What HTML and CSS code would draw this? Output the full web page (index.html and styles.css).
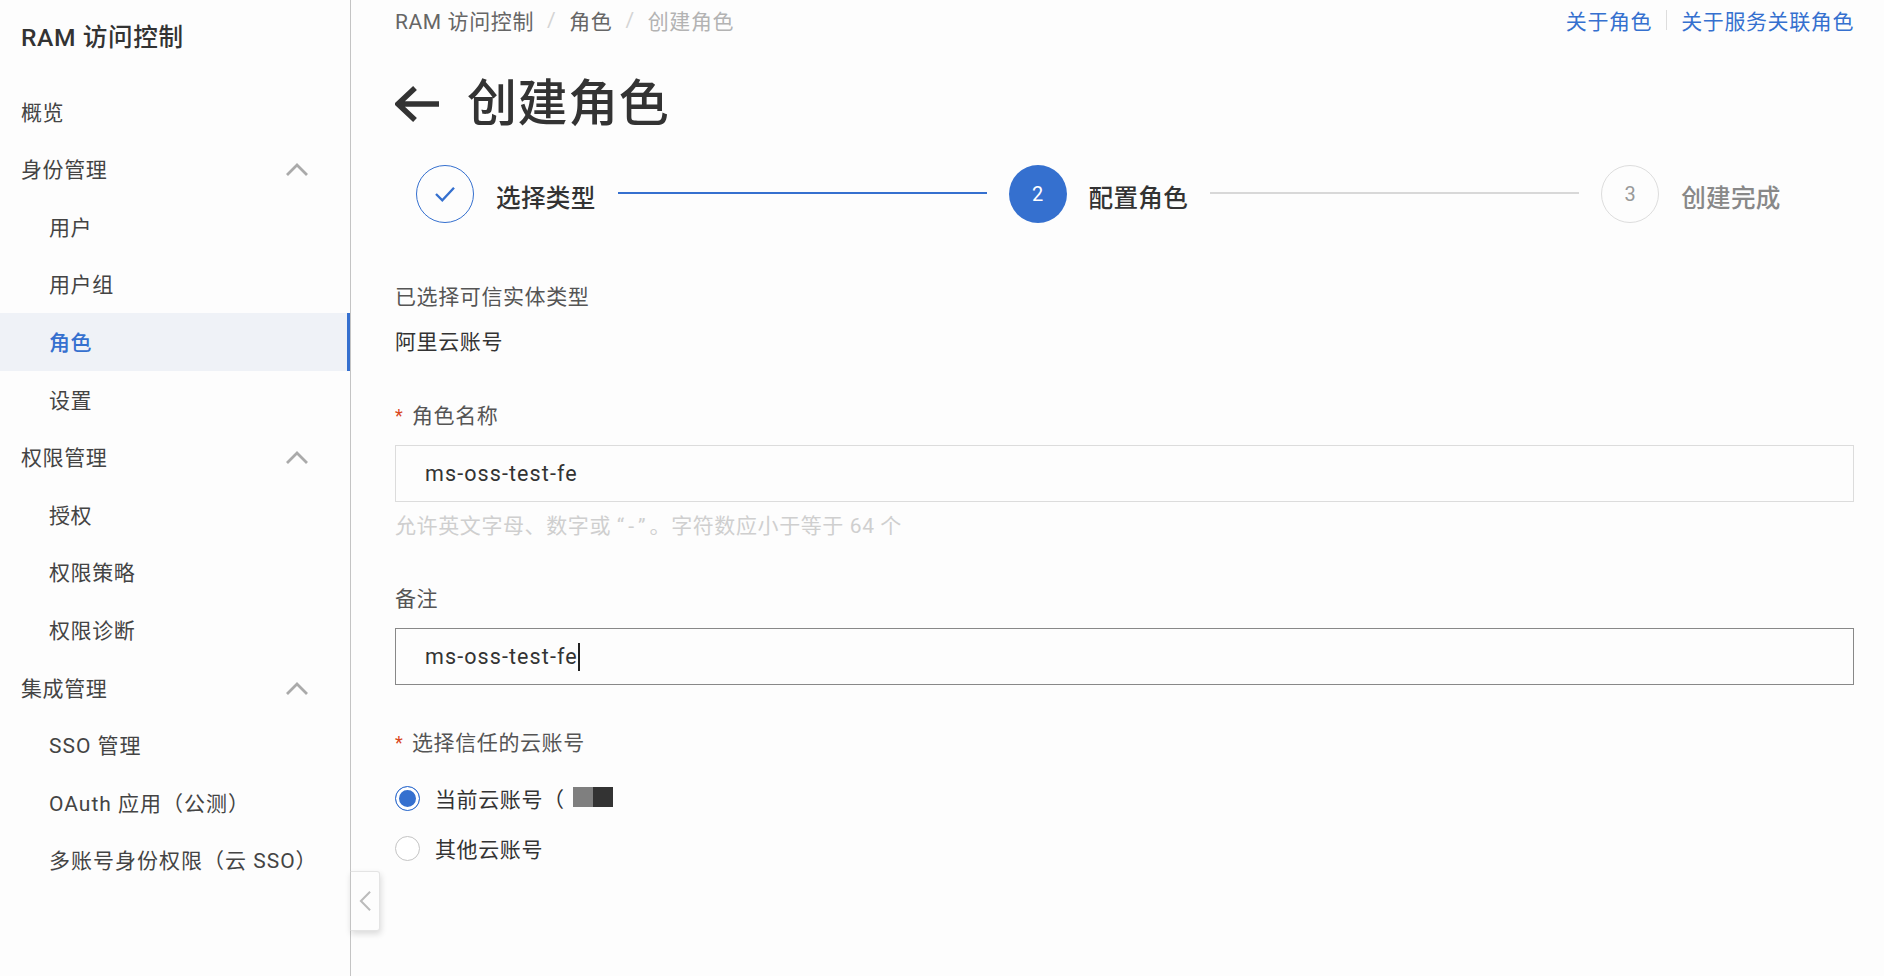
FILE: index.html
```html
<!DOCTYPE html>
<html lang="zh-CN">
<head>
<meta charset="utf-8">
<title>创建角色</title>
<link rel="stylesheet" href="styles.css">
</head>
<body>
<div class="app">
  <aside class="sidebar">
    <div class="brand">RAM 访问控制</div>
    <nav class="nav">
      <a class="item">概览</a>
      <a class="item group">身份管理<svg class="chev" viewBox="0 0 24 14"><path d="M2 12 L12 2 L22 12"/></svg></a>
      <a class="item sub">用户</a>
      <a class="item sub">用户组</a>
      <a class="item sub active">角色</a>
      <a class="item sub">设置</a>
      <a class="item group">权限管理<svg class="chev" viewBox="0 0 24 14"><path d="M2 12 L12 2 L22 12"/></svg></a>
      <a class="item sub">授权</a>
      <a class="item sub">权限策略</a>
      <a class="item sub">权限诊断</a>
      <a class="item group">集成管理<svg class="chev" viewBox="0 0 24 14"><path d="M2 12 L12 2 L22 12"/></svg></a>
      <a class="item sub wide">SSO 管理</a>
      <a class="item sub wide">OAuth 应用（公测）</a>
      <a class="item sub wide">多账号身份权限（云 SSO）</a>
    </nav>
    <div class="collapse"><svg viewBox="0 0 14 24"><path d="M12 2 L2 12 L12 22"/></svg></div>
  </aside>
  <main class="main">
    <div class="topbar">
      <div class="crumbs">
        <span class="crumb">RAM 访问控制</span><span class="sep">/</span>
        <span class="crumb">角色</span><span class="sep">/</span>
        <span class="crumb current">创建角色</span>
      </div>
      <div class="links"><a class="link">关于角色</a><span class="divider"></span><a class="link">关于服务关联角色</a></div>
    </div>
    <h1 class="title">
      <svg class="back" viewBox="0 0 44 36"><path d="M44 18 H4 M20 2 L3 18 L20 34"/></svg>
      <span>创建角色</span>
    </h1>
    <div class="steps">
      <div class="step done"><span class="dot"><svg viewBox="0 0 24 20"><path d="M2 10 L9 17 L22 3"/></svg></span><span class="step-label">选择类型</span></div>
      <div class="bar on"></div>
      <div class="step now"><span class="dot">2</span><span class="step-label">配置角色</span></div>
      <div class="bar"></div>
      <div class="step todo"><span class="dot">3</span><span class="step-label">创建完成</span></div>
    </div>
    <form class="form">
      <div class="field-label plain">已选择可信实体类型</div>
      <div class="value">阿里云账号</div>
      <div class="field-label name"><span class="req">*</span>角色名称</div>
      <div class="input">ms-oss-test-fe</div>
      <div class="hint">允许英文字母、数字或 <span class="quote">“-”</span>。字符数应小于等于 64 个</div>
      <div class="field-label note">备注</div>
      <div class="input focus"><span class="typed">ms-oss-test-fe</span></div>
      <div class="field-label trust"><span class="req">*</span>选择信任的云账号</div>
      <div class="radio first"><span class="circle checked"></span><span>当前云账号（</span><span class="mask"><i class="m1"></i><i class="m2"></i></span></div>
      <div class="radio"><span class="circle"></span><span>其他云账号</span></div>
    </form>
  </main>
</div>
</body>
</html>
```
FILE: styles.css
```css
* { box-sizing: border-box; }
html, body { margin: 0; height: 100%; overflow: hidden; }
body {
  background: #fdfdfd;
  color: #333;
  font-family: Roboto, "Noto Sans CJK SC", "Liberation Sans", sans-serif;
  font-size: 21px;
  letter-spacing: .6px;
}
.app { display: flex; height: 976px; }
.sidebar {
  position: relative;
  width: 351px;
  flex: none;
  border-right: 1px solid #c4c4c4;
  padding-top: 20px;
}
.brand { height: 36px; line-height: 36px; padding-left: 21px; font-size: 24.6px; font-weight: 500; letter-spacing: .6px; color: #333; }
.nav { display: flex; flex-direction: column; margin-top: 26.6px; }
.item {
  display: flex;
  align-items: center;
  height: 57.6px;
  padding-left: 21px;
  padding-bottom: 1.6px;
  color: #444;
  position: relative;
}
.sub { padding-left: 49px; }
.wide { letter-spacing: 1px; }
.chev { position: absolute; left: 285px; top: 23px; width: 24px; height: 14px; }
.chev path { fill: none; stroke: #aaa; stroke-width: 2.8; }
.active { background: #eff2f7; color: #3570cf; font-weight: 500; }
.active::after { content: ""; position: absolute; right: 0; top: 0; bottom: 0; width: 3px; background: #3570cf; }
.collapse {
  position: absolute;
  left: 350px;
  top: 871px;
  width: 30px;
  height: 60px;
  background: #fdfdfd;
  border: 1px solid #e4e4e4;
  border-left: 1px solid #c4c4c4;
  border-radius: 0 3px 3px 0;
  box-shadow: 1px 3px 6px rgba(0,0,0,.14);
  display: flex;
  align-items: center;
  justify-content: center;
}
.collapse svg { width: 13px; height: 22px; }
.collapse path { fill: none; stroke: #bbb; stroke-width: 2.2; }
.main { flex: 1; padding: 0 30px 0 44px; min-width: 0; }
.topbar { display: flex; justify-content: space-between; align-items: center; height: 39px; }
.crumbs { display: flex; align-items: center; color: #666; }
.sep { color: #d4d4d4; margin: 0 13px; }
.current { color: #b3b3b3; }
.links { display: flex; align-items: center; margin-right: 0; }
.link { color: #3570cf; }
.divider { width: 1px; height: 20px; background: #ddd; margin: 0 14px 0 14px; }
.title {
  display: flex;
  align-items: center;
  gap: 28px;
  margin: 38px 0 0;
  height: 54px;
  font-size: 50px;
  letter-spacing: .6px;
  font-weight: 500;
  color: #333;
  line-height: 54px;
}
.back { width: 44px; height: 36px; flex: none; }
.back path { fill: none; stroke: #333; stroke-width: 5.5; }
.steps { display: flex; align-items: flex-start; margin-top: 34px; padding-left: 21px; height: 58px; }
.step { display: flex; align-items: center; flex: none; }
.dot {
  width: 58px;
  height: 58px;
  border-radius: 50%;
  display: flex;
  align-items: center;
  justify-content: center;
  font-size: 20px;
  letter-spacing: 0;
  flex: none;
}
.step-label { font-size: 24.6px; letter-spacing: .3px; font-weight: 500; margin-left: 22px; padding-top: 3px; color: #333; }
.done .dot { border: 1px solid #3570cf; }
.done .dot svg { width: 22px; height: 18px; }
.done .dot path { fill: none; stroke: #3570cf; stroke-width: 2.6; }
.now .dot { background: #3570cf; color: #fff; }
.todo .dot { border: 1px solid #ddd; color: #999; }
.todo .step-label { color: #888; }
.bar { width: 369px; height: 2px; background: #d8d8d8; margin: 27px 22px 0 22px; flex: none; }
.bar.on { background: #3570cf; }
.form { margin-top: 59px; }
.field-label { color: #555; line-height: 30px; display: flex; }
.req { color: #d9471e; width: 17px; flex: none; font-size: 18px; letter-spacing: 0; }
.value { margin-top: 15px; line-height: 30px; color: #333; }
.name { margin-top: 44px; }
.input {
  margin-top: 14px;
  height: 57px;
  border: 1px solid #dcdcdc;
  padding-left: 29px;
  display: flex;
  align-items: center;
  font-size: 21.5px;
  letter-spacing: 1.1px;
  color: #333;
}
.hint { margin-top: 9px; line-height: 30px; color: #cfcfcf; }
.quote { letter-spacing: 4px; }
.note { margin-top: 43px; }
.focus { border-color: #888; }
.typed { border-right: 2px solid #222; line-height: 28px; margin-right: 0; }
.trust { margin-top: 43px; }
.radio { display: flex; align-items: center; height: 50px; color: #333; }
.radio.first { margin-top: 15px; }
.circle {
  width: 25px;
  height: 25px;
  border-radius: 50%;
  border: 1px solid #c4c4c4;
  margin: 0 15px 0 0;
  flex: none;
  background: #fff;
}
.checked { border-color: #3570cf; background: #3570cf; box-shadow: inset 0 0 0 3px #fff; }
.mask { display: flex; margin-left: 8px; position: relative; top: -1px; }
.mask i { display: block; width: 20px; height: 20px; }
.m1 { background: #7f7f7f; }
.m2 { background: #333; }
```
